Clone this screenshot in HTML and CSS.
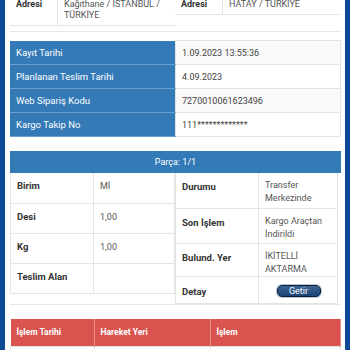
FILE: index.html
```html
<!DOCTYPE html>
<html>
  <head>
    <title>Kargo Takip</title>
    <link rel="stylesheet" href="styles.css">
  </head>
  <body>
    <div class="frame">
      <div class="addr-block">
        <table class="addr-table">
          <tr>
            <th class="addr-label">Adresi</th>
            <td>Kağıthane / İSTANBUL /<br>TÜRKİYE</td>
          </tr>
        </table>
        <table class="addr-table">
          <tr>
            <th class="addr-label">Adresi</th>
            <td>HATAY / TÜRKİYE</td>
          </tr>
        </table>
      </div>

      <table class="info-table">
        <tr>
          <th>Kayıt Tarihi</th>
          <td>1.09.2023 13:55:36</td>
        </tr>
        <tr>
          <th>Planlanan Teslim Tarihi</th>
          <td>4.09.2023</td>
        </tr>
        <tr>
          <th>Web Sipariş Kodu</th>
          <td>7270010061623496</td>
        </tr>
        <tr>
          <th>Kargo Takip No</th>
          <td>111*************</td>
        </tr>
      </table>

      <div class="part-panel">
        <div class="part-head">Parça: 1/1</div>
        <div class="part-body">
          <table class="part-table left">
            <tr><th>Birim</th><td>Mİ</td></tr>
            <tr><th>Desi</th><td>1,00</td></tr>
            <tr><th>Kg</th><td>1,00</td></tr>
            <tr><th>Teslim Alan</th><td></td></tr>
          </table>
          <table class="part-table right">
            <tr class="r1"><th>Durumu</th><td>Transfer Merkezinde</td></tr>
            <tr class="r2"><th>Son İşlem</th><td>Kargo Araçtan İndirildi</td></tr>
            <tr class="r3"><th>Bulund. Yer</th><td>İKİTELLİ AKTARMA</td></tr>
            <tr class="r4"><th>Detay</th><td class="btn-cell"><button class="btn-getir">Getir</button></td></tr>
          </table>
        </div>
      </div>

      <table class="move-table">
        <thead>
          <tr>
            <th class="c1">İşlem Tarihi</th>
            <th class="c2">Hareket Yeri</th>
            <th>İşlem</th>
          </tr>
        </thead>
        <tbody>
          <tr><td></td><td></td><td></td></tr>
        </tbody>
      </table>
    </div>
  </body>
</html>
```

FILE: styles.css
```css
body {
  margin: 0;
  font-family: Roboto, "Liberation Sans", Arial, sans-serif;
  color: #333;
  background: #fff;
  overflow: hidden;
}
.frame {
  border-left: 5px solid #0c4a95;
  border-right: 5px solid #0c4a95;
  padding: 0 4px 0 5px;
  min-height: 400px;
}
table {
  border-collapse: collapse;
}
.addr-block {
  display: grid;
  grid-template-columns: 165px 1fr;
  align-items: start;
  margin-top: -4px;
  padding-bottom: 5px;
  border-bottom: 1px solid #e6e6e6;
}
.addr-table {
  width: 100%;
  font-size: 9px;
  line-height: 11px;
}
.addr-table th,
.addr-table td {
  text-align: left;
  vertical-align: top;
  padding: 3px 4px 4px 6px;
  border-bottom: 1px solid #e3e3e3;
  color: #555;
  font-weight: normal;
  white-space: nowrap;
}
.addr-table .addr-label {
  width: 37px;
  font-weight: bold;
  color: #333;
  border-right: 1px solid #e3e3e3;
}
.info-table {
  width: 100%;
  margin-top: 8px;
  font-size: 9px;
}
.info-table th,
.info-table td {
  height: 23px;
  padding: 0 6px;
  text-align: left;
  font-weight: normal;
}
.info-table th {
  width: 153px;
  background: #337ab7;
  color: #fff;
  font-size: 9.5px;
  border-bottom: 1px solid #6b9fd0;
}
.info-table td {
  color: #444;
  border: 1px solid #e4e4e4;
}
.info-table tr:nth-child(odd) td {
  background: #f9f9f9;
}
.part-panel {
  margin-top: 14px;
  border-bottom: 1px solid #e6e6e6;
}
.part-head {
  background: #337ab7;
  color: #fff;
  font-size: 9px;
  text-align: center;
  height: 22px;
  line-height: 22px;
}
.part-body {
  display: grid;
  grid-template-columns: 165px 1fr;
  align-items: start;
}
.part-table {
  width: 100%;
  font-size: 9px;
}
.part-table th,
.part-table td {
  text-align: left;
  vertical-align: top;
  border: 1px solid #e4e4e4;
  border-top: none;
}
.part-table th {
  font-weight: bold;
  color: #333;
  font-size: 9.5px;
}
.part-table td {
  color: #555;
}
.left th,
.left td {
  height: 30px;
  padding: 6px 5px 0 6px;
  line-height: 14px;
  box-sizing: border-box;
}
.left th {
  width: 83px;
}
.right {
  width: 163px;
}
.right th,
.right td {
  padding: 6px 5px 0 6px;
  line-height: 13px;
  box-sizing: border-box;
}
.right th {
  width: 83px;
  padding-top: 7px;
}
.right .r1 th,
.right .r1 td,
.right .r2 th,
.right .r2 td {
  height: 35px;
}
.right .r3 th,
.right .r3 td {
  height: 33px;
}
.right .r4 th,
.right .r4 td {
  height: 27px;
}
.right .r4 th {
  padding-top: 8px;
}
.right .r4 td {
  padding-top: 5px;
}
.btn-cell {
  text-align: center !important;
}
.btn-getir {
  margin-top: 3px;
  width: 44px;
  height: 12px;
  padding: 0;
  font-family: Roboto, "Liberation Sans", Arial, sans-serif;
  font-size: 9px;
  line-height: 10px;
  color: #fff;
  background: linear-gradient(#3d6594, #1b4474);
  border: 1px solid #0b1f3a;
  border-radius: 5px;
  box-shadow: 0 0 0 1px #b9c7d8;
}
.move-table {
  width: 100%;
  margin-top: 14px;
  font-size: 8.5px;
}
.move-table th {
  background: #d9534f;
  color: #fff;
  text-align: left;
  height: 27px;
  padding: 0 6px;
  border-right: 1px solid #e9908d;
}
.move-table .c1 {
  width: 71px;
}
.move-table .c2 {
  width: 103px;
}
.move-table td {
  height: 26px;
  border: 1px solid #e4e4e4;
}
```
